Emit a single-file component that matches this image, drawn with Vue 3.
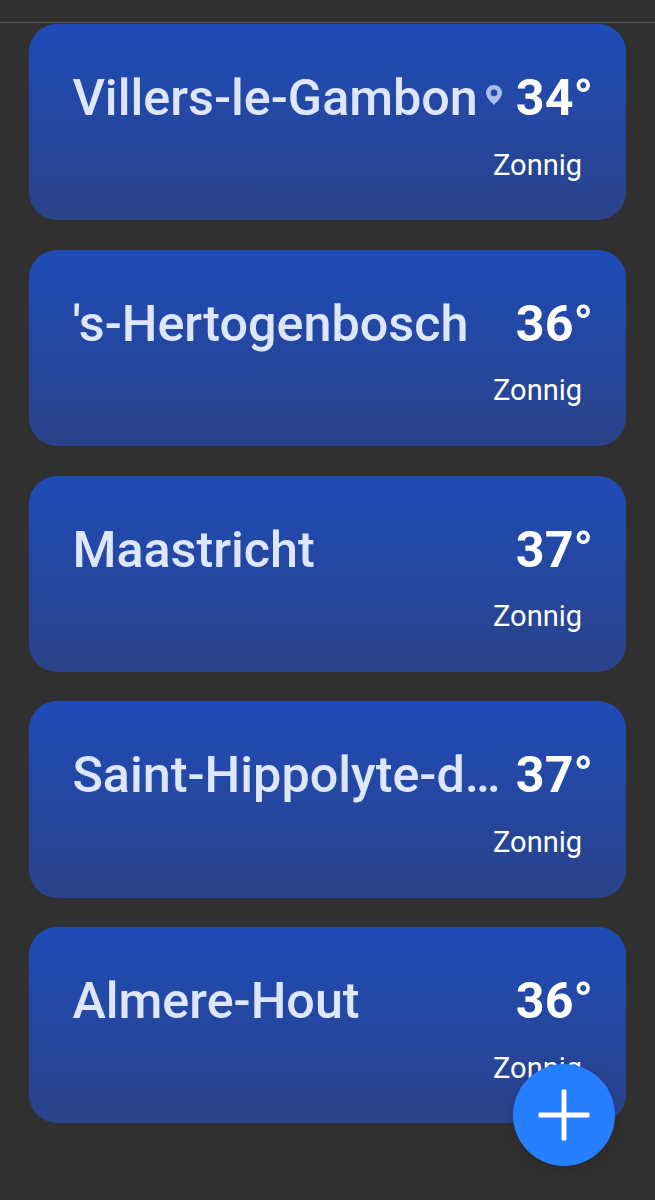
<script setup>
const cities = [
  { name: 'Villers-le-Gambon', temp: '34°', located: true },
  { name: "'s-Hertogenbosch", temp: '36°' },
  { name: 'Maastricht', temp: '37°' },
  { name: 'Saint-Hippolyte-d…', temp: '37°' },
  { name: 'Almere-Hout', temp: '36°' },
]
</script>

<template>
  <main class="screen">
    <header class="topbar"></header>
    <section class="list">
      <article v-for="city in cities" :key="city.name" class="card">
        <div class="row">
          <div class="place">
            <span class="name">{{ city.name }}</span>
            <svg v-if="city.located" class="pin" viewBox="0 0 16 20">
              <path
                fill-rule="evenodd"
                d="M8 0C3.6 0 0 3.5 0 7.8C0 12.5 4.5 16.3 8 20C11.5 16.3 16 12.5 16 7.8C16 3.5 12.4 0 8 0ZM8 4.6A3.3 3.3 0 1 1 8 11.2A3.3 3.3 0 1 1 8 4.6Z"
              />
            </svg>
          </div>
          <span class="temp">{{ city.temp }}</span>
        </div>
        <p class="condition">Zonnig</p>
      </article>
    </section>
    <button class="add" aria-label="Toevoegen">
      <svg viewBox="0 0 52 52">
        <rect x="0.5" y="23.6" width="51" height="4.8" rx="1" />
        <rect x="23.6" y="0.5" width="4.8" height="51" rx="1" />
      </svg>
    </button>
  </main>
</template>

<style>
body {
  background: #303030;
}
</style>

<style scoped>
.screen {
  position: relative;
  box-sizing: border-box;
  height: 1200px;
  overflow: hidden;
  background: #303030;
  color: #fff;
  font-family: Roboto, "Liberation Sans", sans-serif;
}
.topbar {
  box-sizing: border-box;
  height: 23px;
  border-bottom: 1px solid #5a5a5a;
}
.list {
  display: flex;
  flex-direction: column;
  gap: 29.5px;
  padding: 1.3px 29px 0;
}
.card {
  box-sizing: border-box;
  height: 196.2px;
  padding: 43.9px 33px 0 43.4px;
  border-radius: 28px;
  background: linear-gradient(#1f4bb7, #2a438a);
}
.row {
  display: flex;
  justify-content: space-between;
  height: 60px;
  line-height: 60px;
}
.place {
  display: flex;
}
.name {
  white-space: nowrap;
  font-size: 50.3px;
  font-weight: 500;
  color: #dde6fb;
}
.pin {
  flex: none;
  width: 16px;
  height: 20px;
  margin: 17px 0 0 8.5px;
  fill: #a9bdea;
}
.temp {
  font-size: 50.2px;
  font-weight: 700;
}
.condition {
  margin: 18.6px 11px 0 0;
  font-size: 29px;
  line-height: 36px;
  text-align: right;
}
.add {
  position: absolute;
  left: 513px;
  top: 1064px;
  display: grid;
  place-items: center;
  width: 102px;
  height: 102px;
  padding: 0;
  border: 0;
  border-radius: 50%;
  background: #267fff;
  box-shadow: 0 4px 14px rgba(0, 0, 0, 0.14);
}
.add svg {
  width: 52px;
  height: 52px;
  fill: #fff;
}
</style>
